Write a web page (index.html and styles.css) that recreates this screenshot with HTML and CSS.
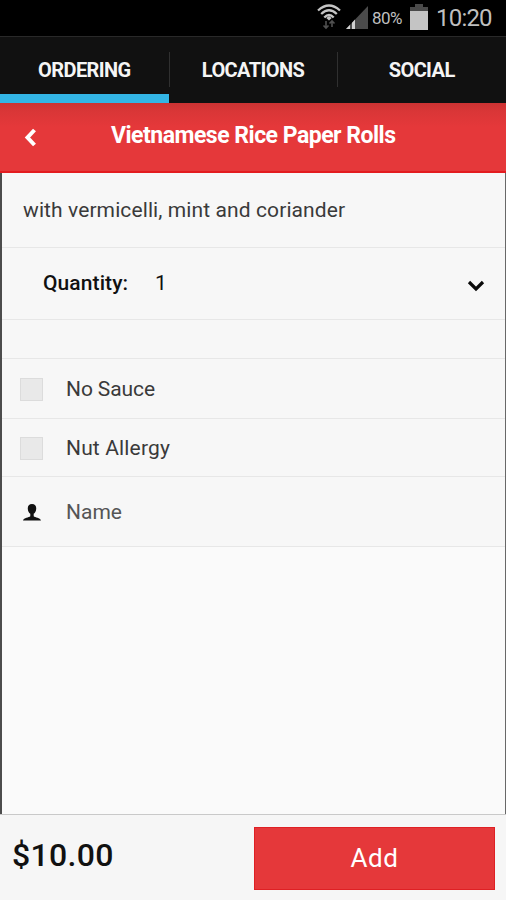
FILE: index.html
```html
<!DOCTYPE html>
<html lang="en">
<head>
<meta charset="utf-8">
<title>Vietnamese Rice Paper Rolls</title>
<link rel="stylesheet" href="styles.css">
</head>
<body>
<div class="status">
  <svg class="wifi" width="24" height="28" viewBox="0 0 24 28" fill="none" stroke="#c4c4c4" stroke-width="2.3">
    <path d="M1 7.500Q12-2.500 23 7.500M4.200 11Q12 3.500 19.800 11M7.300 14.500Q12 9.500 16.700 14.500"/>
    <path d="M9.300 15L12 13l2.700 2L12 17.500z" fill="#c4c4c4" stroke="none"/>
    <path d="M9 18v7M6.500 22.500L9 25l2.500-2.500M15 24v-6M12.500 20.500L15 18l2.500 2.500" stroke="#505050" stroke-width="1.600"/>
  </svg>
  <svg class="signal" width="22" height="23" viewBox="0 0 22 23">
    <path d="M0 23L22 0v23z" fill="#4b4b4b"/>
    <path d="M0 23l4-4.200V23zM6 23v-6.300l3-3.100V23z" fill="#d0d0d0"/>
  </svg>
  <span class="percent">80%</span>
  <svg class="battery" width="18" height="26" viewBox="0 0 18 26">
    <path d="M5 0h8v3h5v5H0V3h5z" fill="#4a4a4a"/>
    <path d="M0 7h18v19H0z" fill="#c4c4c4"/>
  </svg>
  <span class="clock">10:20</span>
</div>
<nav class="tabs">
  <div class="tab active"><span>ORDERING</span></div>
  <div class="tab"><span>LOCATIONS</span></div>
  <div class="tab"><span>SOCIAL</span></div>
</nav>
<header class="title">
  <svg class="back" width="13" height="19" viewBox="0 0 13 19" fill="none" stroke="#fff" stroke-width="4"><path d="M10.500 2L3.500 9.500l7 7.500"/></svg>
  <h1>Vietnamese Rice Paper Rolls</h1>
</header>
<main class="content">
  <div class="row description"><span>with vermicelli, mint and coriander</span></div>
  <div class="row quantity">
    <b>Quantity:</b><span class="value">1</span>
    <svg class="chevron" width="18" height="12" viewBox="0 0 18 12" fill="none" stroke="#0a0a0a" stroke-width="3.200"><path d="M2 2l7 7 7-7"/></svg>
  </div>
  <div class="row spacer"></div>
  <div class="row option sauce"><i class="box"></i><span>No Sauce</span></div>
  <div class="row option allergy"><i class="box"></i><span>Nut Allergy</span></div>
  <div class="row option name">
    <svg class="person" width="18" height="17" viewBox="0 0 18 17" fill="#111"><path d="M9 0c3 0 4.400 2 4.200 4.700-.1 2.500-1 4-2.500 5v2.600c1.300 1.400 6.500 1.200 7.300 4.200H0c.8-3 6-2.800 7.300-4.200V9.700c-1.500-1-2.400-2.500-2.500-5C4.600 2 6 0 9 0z"/></svg>
    <span>Name</span>
  </div>
</main>
<footer class="footer">
  <strong class="price">$10.00</strong>
  <button class="add">Add</button>
</footer>
</body>
</html>
```
FILE: styles.css
```css
* { box-sizing: border-box; }
body {
  margin: 0;
  width: 506px;
  height: 900px;
  display: flex;
  flex-direction: column;
  overflow: hidden;
  background: #fafafa;
  font-family: Roboto, "Liberation Sans", sans-serif;
  white-space: nowrap;
}
.status {
  height: 36px;
  display: flex;
  align-items: flex-start;
  background: #000;
  color: #bfbfbf;
  padding-left: 317px;
}
.wifi { margin-top: 3px; }
.signal { margin: 6px 0 0 5px; }
.percent { margin: 8px 0 0 4px; width: 38px; font-size: 17px; line-height: 20px; letter-spacing: -0.5px; }
.battery { margin-top: 4px; }
.clock { margin: 4px 0 0 8px; font-size: 24px; line-height: 28px; letter-spacing: -0.8px; }
.tabs {
  height: 67px;
  display: flex;
  background: #111;
  border-top: 1px solid #292929;
}
.tab {
  flex: 1;
  display: flex;
  justify-content: center;
  align-items: flex-start;
  padding-top: 21px;
  color: #f5f5f5;
  font-size: 20px;
  font-weight: 700;
  line-height: 24px;
  letter-spacing: -0.6px;
  background: linear-gradient(#303030, #303030) 0 15px / 1px 35px no-repeat;
}
.tab.active { background: none; border-bottom: 9px solid #33b5e5; }
.title {
  height: 70px;
  display: flex;
  align-items: flex-start;
  background: linear-gradient(#cc3333, #d93637 8px, #e5383a 24px);
  border-bottom: 2px solid #e31c20;
  color: #fff;
}
.back { margin: 25px 0 0 24px; }
.title h1 { margin: 19px 0 0 74px; font-size: 23px; line-height: 27px; font-weight: 700; letter-spacing: -0.5px; }
.content { flex: 1; border-left: 2px solid #4c4c4c; border-right: 1px solid #686868; }
.row {
  display: flex;
  align-items: center;
  background: #f7f7f7;
  border-bottom: 1px solid #e7e7e7;
  color: #3a3a3a;
  font-size: 21px;
  line-height: 26px;
}
.description { height: 75px; padding-left: 21px; letter-spacing: 0.1px; }
.quantity { height: 72px; padding: 0 0 2px 41px; color: #111; }
.quantity b { width: 86px; font-weight: 500; letter-spacing: 0.1px; }
.value { margin-left: 26px; }
.chevron { margin: 6px 20px 0 auto; }
.spacer { height: 39px; }
.option { padding-left: 18px; }
.option span { margin-left: 23px; }
.sauce { height: 60px; }
.sauce span { letter-spacing: -0.1px; }
.allergy { height: 58px; }
.allergy span { letter-spacing: 0.15px; }
.name { height: 70px; color: #555; }
.box { width: 23px; height: 23px; margin-top: 2px; background: #e9e9e9; border: 1px solid #dcdcdc; }
.person { margin: 2px 2px 0 3px; }
.footer {
  height: 86px;
  display: flex;
  background: #f6f6f6;
  border-top: 1px solid #c9c9c9;
}
.price { width: 254px; padding: 21px 0 0 12px; font-size: 32px; line-height: 38px; font-weight: 500; letter-spacing: 0.3px; color: #111; }
.add {
  width: 241px;
  height: 63px;
  margin: 12px 0 0;
  padding: 0;
  border: 1px solid #df2024;
  background: #e5383a;
  color: #fff;
  font: 400 26px/61px Roboto, "Liberation Sans", sans-serif;
  letter-spacing: 0.6px;
}
```
